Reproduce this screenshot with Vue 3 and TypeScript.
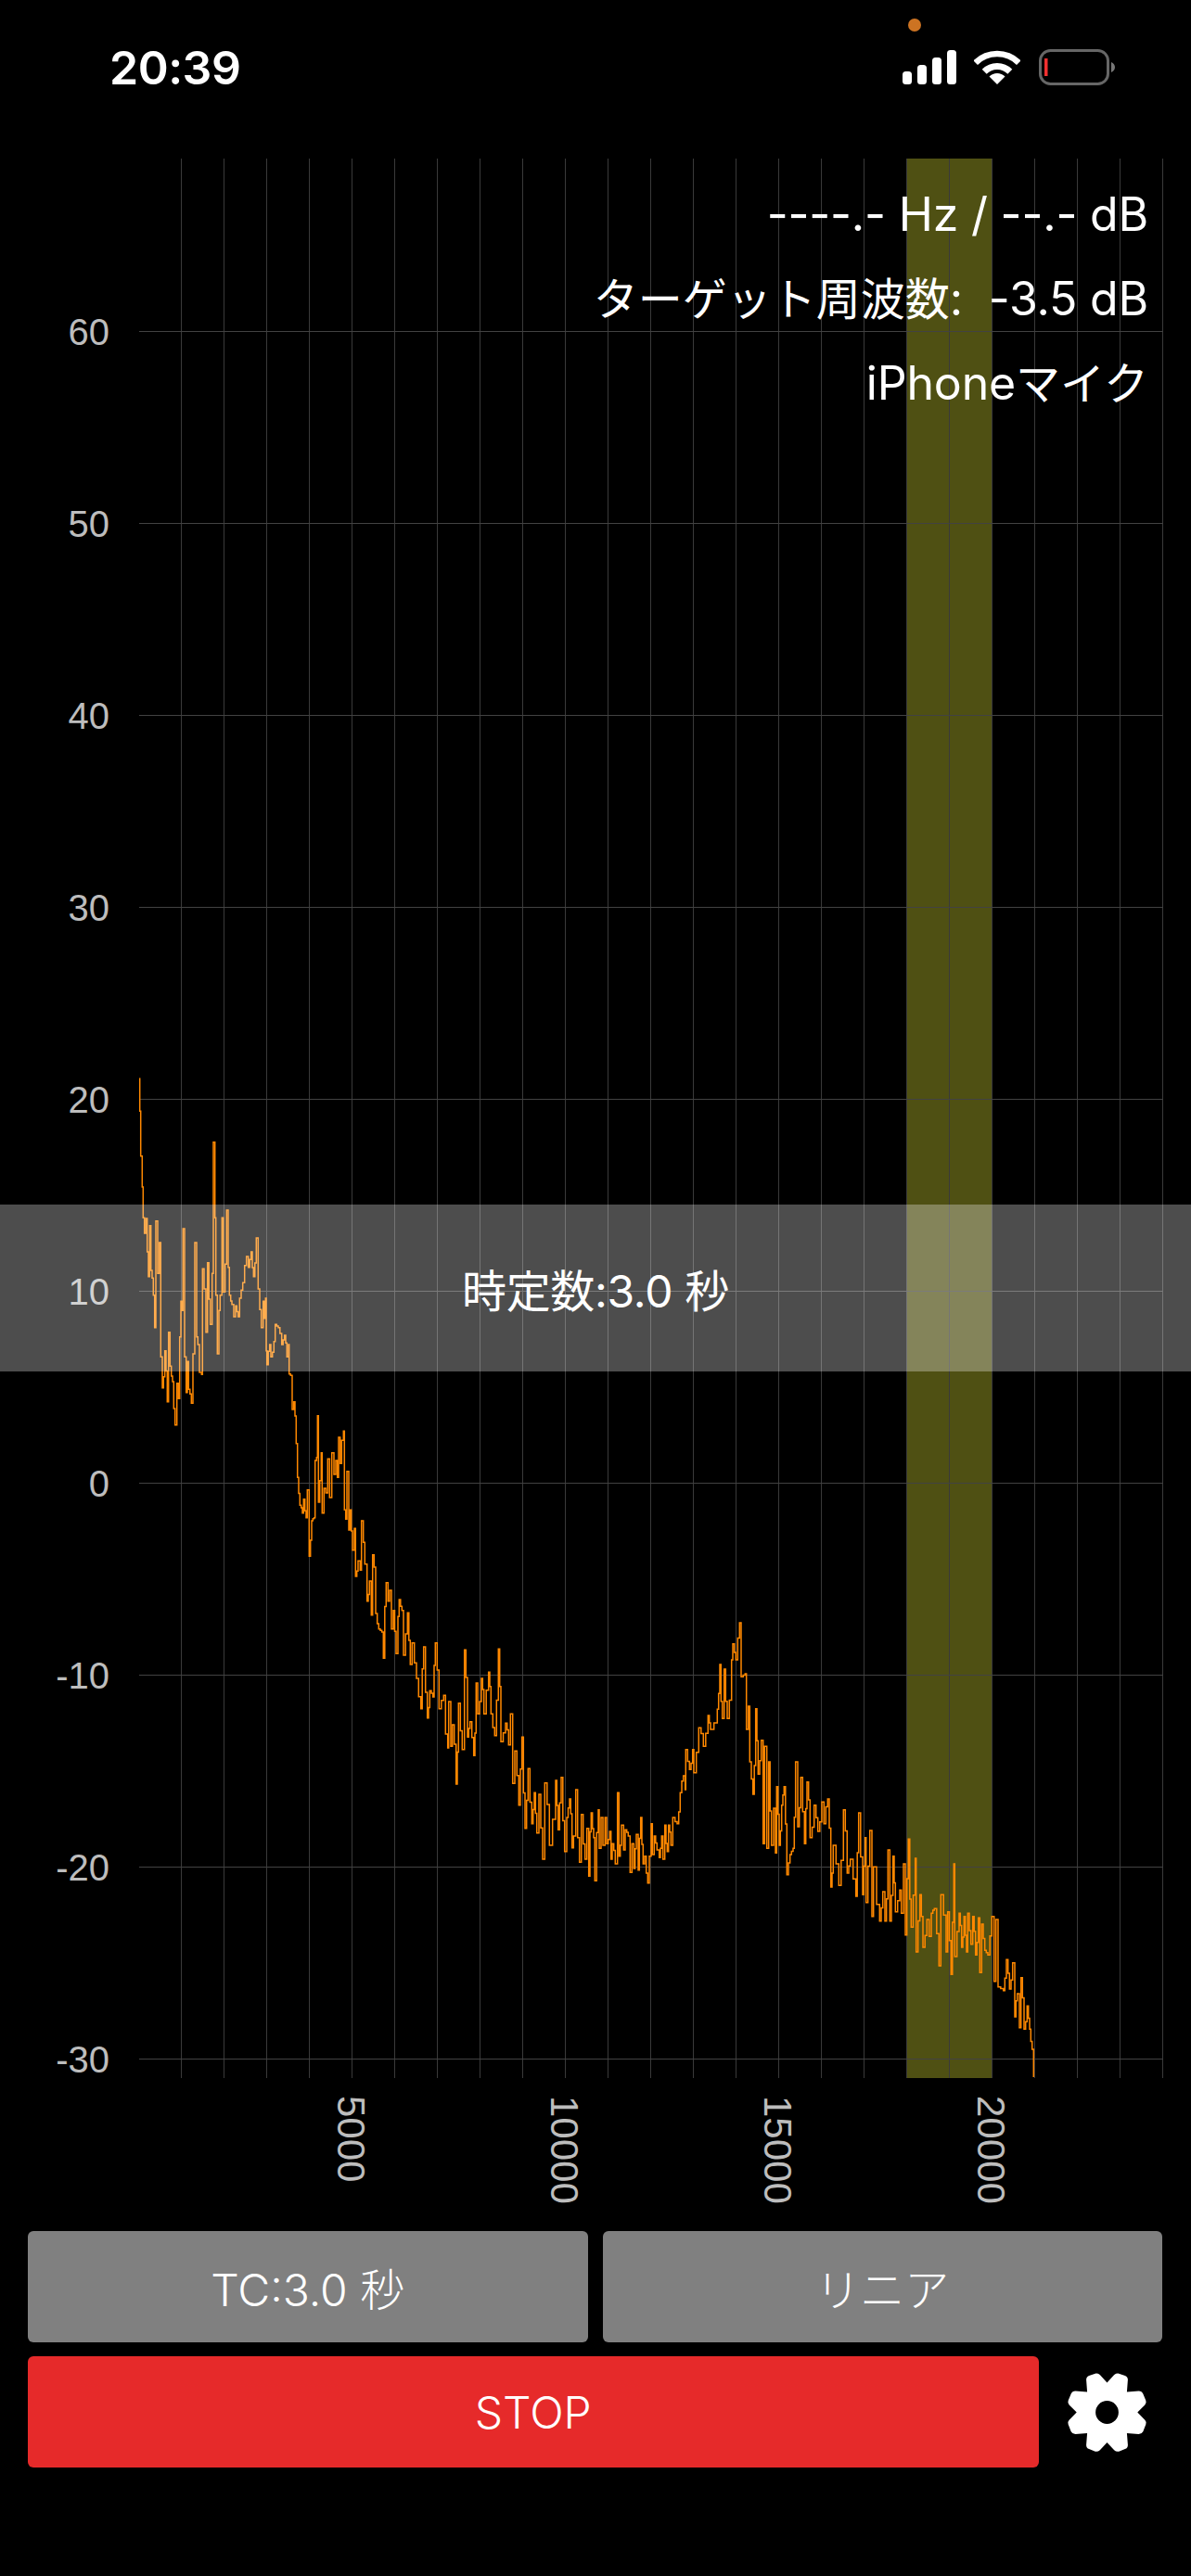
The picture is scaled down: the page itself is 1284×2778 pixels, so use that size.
<script setup lang="ts">
type P = [number, number]

const z2: number[] = [450,100,452,205,455,350,460,450,463,550,467,600,472,552,476,660,480,740,484,575,488,720,492,745,496,800,500,905,504,560,510,730,515,630,520,1000,525,1100,533,980,541,1145,545,920,550,1030,558,1080,566,1220,572,1085,577,1135,581,935,585,820,589,850,592,585,597,1000,602,1115,606,1015,610,1105,619,1150,624,990,630,630,636,935,640,960,645,1050,652,1057,655,715,660,780,666,920,671,695,680,895,686,730,690,305,695,550,698,800,703,990,708,850,712,800,718,550,722,790,728,700,733,525,738,710,742,800,750,830,756,870,762,835,770,870,775,810,785,760,797,675,803,710,812,660,820,740,829,615,835,780,845,905,851,820,855,875,859,810,861,980,863,1025,872,960,876,1000,886,950,890,895,900,905,911,960,920,930,928,1000,933,960,935,1055,940,1060,945,1170,950,1145,958,1280,962,1390,970,1480,978,1505,982,1460,990,1520,994,1430]
const z3a: number[] = [100,535,108,420,116,410,119,225,124,215,127,80,130,360,134,290,139,200,142,395,148,315,154,330,160,220,166,345,173,200,180,270,186,225,191,280,195,150,200,235,205,160,211,130,214,385,218,415,222,260,228,450,232,385,240,515,246,445,250,600,258,550,265,580,269,420,275,490,280,560,287,680,295,615,301,725,305,530,310,570,315,720,325,770,335,780,340,865,349,620,355,680,360,645,366,770,372,710,381,850,387,730,391,675,400,710,405,855,418,718,427,885,433,815,440,880,447,930,461,1028,470,828,482,1058,490,970,500,990,508,815,520,1028,535,985,541,1110,548,1155,551,1005,558,1150,563,1080,575,1272,583,1010,595,1160,602,838,612,1120,620,1070,632,1180,640,945,645,1045,657,930,665,1045,680,910,688,1045,700,1115,712,835,720,1135,735,1075,745,1145,751,1045,758,1270,765,1165,778,1340,788,1120,798,1415,808,1222,820,1400,828,1300,836,1430,843,1305,855,1515,862,1268,877,1470,897,1260]
const z9: number[] = [5,40,15,-130,26,110,33,0,42,-60,50,98,55,60,62,-90,68,65,74,145,80,-10,92,135,98,35,104,190,112,-15,120,65,124,205,135,-25,138,100,144,0,150,90,157,0,162,85,172,45,176,135,180,85,190,150,197,-80,202,125,210,25,217,105,222,40,232,60,238,178,244,85,250,165,258,55,264,170,272,0,280,150,285,125,290,180,295,212,300,125,306,20,310,120,316,60,325,105,332,130,340,60,344,135,350,25,358,110,362,25,370,90,376,0]
const z3b: number[] = [1290,1400,1300,1300,1310,1245,1316,1290,1318,1160,1330,1225,1340,1160,1344,1235,1360,1090,1375,1150,1390,1050,1398,1095,1420,1030,1428,885,1436,1060,1442,900,1452,1060,1466,870,1470,818,1480,870,1492,750,1497,925]
const z4: number[] = [58,175,70,165,74,345,80,270,85,450,95,555,104,278,112,490,122,380,128,715,133,400,140,730,146,450,155,720,162,600,168,745,172,530,180,720,188,590,196,530,205,815,215,750,225,730,233,450,240,660,250,500,262,715,270,515,280,695,293,590,305,675,318,580,325,650,337,570,347,855,355,720,373,850,388,605,400,810,410,765,428,885,437,615,450,880,458,695,461,905,473,672,480,950,485,790,505,965,515,870,522,965,532,735,538,965,548,755,556,935,570,865,575,940,582,780,588,1010,598,700,607,985,620,762,623,1065,635,880,645,1050,658,960,665,1015,672,940,682,925,697,1110,703,880,720,1065,725,935,736,1138,745,780,748,1080,762,940,770,1050,778,950,786,1065,790,940,800,1040,806,950,815,1075,824,955,829,1132,835,975,845,1060,855,1075,868,950,875,1160,881,960,888,1178,905,1190,915,1090,925,1185,935,1100,942,1275,950,1200,957,1310,962,1148,972,1315,982,1240,990,1315,998,1380,1003,1470]

function mapPts(raw: number[], ox: number, oy: number): P[] {
  const out: P[] = []
  for (let i = 0; i < raw.length; i += 2) out.push([ox + raw[i] / 3, oy + raw[i + 1] / 3])
  return out
}

const pts: P[] = [
  ...mapPts(z2, 0, 1130),
  ...mapPts(z3a, 300, 1500),
  ...mapPts(z9, 600, 1960),
  ...mapPts(z3b, 300, 1500),
  ...mapPts(z4, 780, 1750),
]

function buildTrace(list: P[]): string {
  let seed = 17
  const rnd = () => {
    seed = (seed * 16807) % 2147483647
    return seed / 2147483647
  }
  let d = `M${list[0][0].toFixed(1)} ${list[0][1].toFixed(1)}`
  for (let i = 1; i < list.length; i++) {
    const [x0, y0] = list[i - 1]
    const [x1, y1] = list[i]
    const gap = x1 - x0
    if (gap > 2.4) {
      const xm = x0 + gap / 2
      const ym = y0 + (y1 - y0) * (0.3 + rnd() * 0.4)
      d += `H${xm.toFixed(1)}V${ym.toFixed(1)}`
    }
    d += `H${x1.toFixed(1)}V${y1.toFixed(1)}`
  }
  return d
}

const trace = buildTrace(pts)
const xLines = Array.from({ length: 24 }, (_, i) => 195.5 + 46 * i)
const yRows = [60, 50, 40, 30, 20, 10, 0, -10, -20, -30].map((v, i) => ({ v, y: 357.5 + 207 * i }))
const xTicks = [5000, 10000, 15000, 20000].map((v) => ({ v, x: 149.3 + (v / 1000) * 46 }))
</script>

<template>
  <div class="screen">
    <div class="status">
      <span class="time">20:39</span>
      <span class="dot"></span>
      <div class="status-icons">
        <svg class="signal" width="58" height="37" viewBox="0 0 58 37">
          <rect x="0" y="23" width="10" height="14" rx="3.5" fill="#fff" />
          <rect x="16" y="16" width="10" height="21" rx="3.5" fill="#fff" />
          <rect x="32" y="8" width="10" height="29" rx="3.5" fill="#fff" />
          <rect x="48" y="0" width="10" height="37" rx="3.5" fill="#fff" />
        </svg>
        <svg class="wifi" width="50" height="38" viewBox="0 0 50 38">
          <path d="M1.700 13.700A33 33 0 0 1 48.300 13.700" fill="none" stroke="#fff" stroke-width="6.500" />
          <path d="M11.200 23.200A19.500 19.500 0 0 1 38.800 23.200" fill="none" stroke="#fff" stroke-width="7" />
          <path d="M25 37L16.500 28.500A12 12 0 0 1 33.500 28.500Z" fill="#fff" />
        </svg>
        <svg class="battery" width="82" height="39" viewBox="0 0 82 39">
          <rect x="1.500" y="1.500" width="73" height="36" rx="11" fill="none" stroke="#666" stroke-width="3" />
          <rect x="6" y="10" width="3.500" height="19" fill="#f23030" />
          <path d="M78 14C80.500 15 82 17 82 19.500C82 22 80.500 24 78 25Z" fill="#777" />
        </svg>
      </div>
    </div>

    <div class="chart">
      <svg class="plot" width="1284" height="2235" viewBox="0 171 1284 2235">
        <defs>
          <clipPath id="plot-clip"><rect x="149" y="171" width="1105" height="2070" /></clipPath>
        </defs>
        <rect x="977.300" y="171" width="92" height="2070" fill="#4f5013" />
        <g class="grid-v">
          <line v-for="x in xLines" :key="x" :x1="x" :x2="x" y1="171" y2="2241" />
        </g>
        <g class="grid-h">
          <line v-for="r in yRows" :key="r.v" x1="150" x2="1254" :y1="r.y" :y2="r.y" />
        </g>
        <path class="trace" clip-path="url(#plot-clip)" :d="trace" />
        <text v-for="r in yRows" :key="r.v" class="tick" x="118" :y="r.y + 14" text-anchor="end">{{ r.v }}</text>
        <text
          v-for="t in xTicks"
          :key="t.v"
          class="tick tick-x"
          :transform="`translate(${t.x - 15} 2260) rotate(90)`"
        >{{ t.v }}</text>
      </svg>
      <div class="info">
        <div>----.- Hz / --.- dB</div>
        <div><span class="ja">ターゲット周波数</span>: &nbsp;-3.5 dB</div>
        <div>iPhone<span class="ja">マイク</span></div>
      </div>
      <div class="tc-band">時定数:3.0 秒</div>
    </div>

    <div class="controls">
      <div class="row two">
        <button class="btn gray">TC:3.0 秒</button>
        <button class="btn gray">リニア</button>
      </div>
      <div class="row stop-row">
        <button class="btn red">STOP</button>
        <div class="gear-wrap">
          <svg class="gear" width="87" height="87" viewBox="90 83 260 260">
            <path
              fill="#fff"
              fill-rule="evenodd"
              d="M220 117L243 92Q250 87 258 88L278 95Q287 99 287 108L284 147L322 144Q332 144 336 153L345 175Q348 183 342 189L318 213L342 238Q348 244 345 252L336 275Q332 283 322 283L284 280L287 318Q287 328 278 331L258 339Q250 341 243 335L220 310L197 335Q190 341 182 339L162 331Q153 328 153 318L156 280L118 283Q108 283 104 275L95 252Q92 244 98 238L122 213L98 189Q92 183 95 175L104 153Q108 144 118 144L156 147L153 108Q153 99 162 95L182 88Q190 87 197 92ZM220 176A37 37 0 1 0 220 250A37 37 0 1 0 220 176Z"
            />
          </svg>
        </div>
      </div>
    </div>
  </div>
</template>

<style scoped>
.screen {
  position: relative;
  width: 1284px;
  height: 2778px;
  background: #000;
  overflow: hidden;
  color: #fff;
  font-family: "Liberation Sans", "Noto Sans CJK JP", sans-serif;
}
.status {
  position: relative;
  height: 171px;
  display: flex;
  justify-content: space-between;
  align-items: flex-start;
  padding: 0 82px 0 118px;
  box-sizing: border-box;
}
.time {
  margin-top: 43px;
  font-family: Inter, sans-serif;
  font-size: 50px;
  line-height: 60px;
  font-weight: 600;
  letter-spacing: -0.5px;
}
.dot {
  position: absolute;
  left: 979px;
  top: 20px;
  width: 14px;
  height: 14px;
  border-radius: 50%;
  background: #cc7322;
}
.status-icons {
  margin-top: 53px;
  display: flex;
  align-items: flex-start;
  gap: 19px;
}
.signal,
.wifi {
  margin-top: 1px;
}
.battery {
  margin-left: 1px;
}
.chart {
  position: relative;
  height: 2235px;
}
.plot {
  display: block;
}
.grid-v line {
  stroke: #3a3a3a;
  stroke-width: 1;
}
.grid-h line {
  stroke: #424242;
  stroke-width: 1;
}
.trace {
  fill: none;
  stroke: #ff8800;
  stroke-width: 1.500;
}
.tick {
  fill: #bdbdbd;
  font-size: 40px;
}
.tick-x {
  font-size: 42px;
}
.info {
  position: absolute;
  top: 15px;
  right: 46px;
  text-align: right;
  font-family: Inter, "Noto Sans CJK JP", sans-serif;
  font-size: 50px;
  line-height: 91px;
  font-weight: 400;
  letter-spacing: -0.2px;
  white-space: nowrap;
}
.ja {
  font-size: 48px;
  letter-spacing: 0;
}
.tc-band {
  position: absolute;
  left: 0;
  right: 0;
  top: 1128px;
  height: 180px;
  background: rgba(255, 255, 255, 0.3);
  display: flex;
  align-items: center;
  justify-content: center;
  font-family: Inter, "Noto Sans CJK JP", sans-serif;
  font-size: 48px;
  font-weight: 400;
  letter-spacing: -0.3px;
}
.controls {
  display: flex;
  flex-direction: column;
  gap: 15px;
  padding: 0 31px 0 30px;
}
.row {
  display: flex;
  height: 120px;
}
.two {
  gap: 16px;
}
.two .btn {
  flex: 1;
}
.btn {
  border: none;
  border-radius: 6px;
  color: #fff;
  padding: 0;
  font-family: Inter, "Noto Sans CJK JP", sans-serif;
  font-size: 48px;
  font-weight: 300;
}
.gray {
  background: #808080;
}
.red {
  background: #e62a2a;
  width: 1089.500px;
}
.stop-row {
  margin-right: -15px;
}
.gear-wrap {
  flex: 1;
  display: flex;
  align-items: center;
  justify-content: center;
}
.gear {
  display: block;
}
</style>

<style>
html,
body {
  background: #000;
}
</style>
